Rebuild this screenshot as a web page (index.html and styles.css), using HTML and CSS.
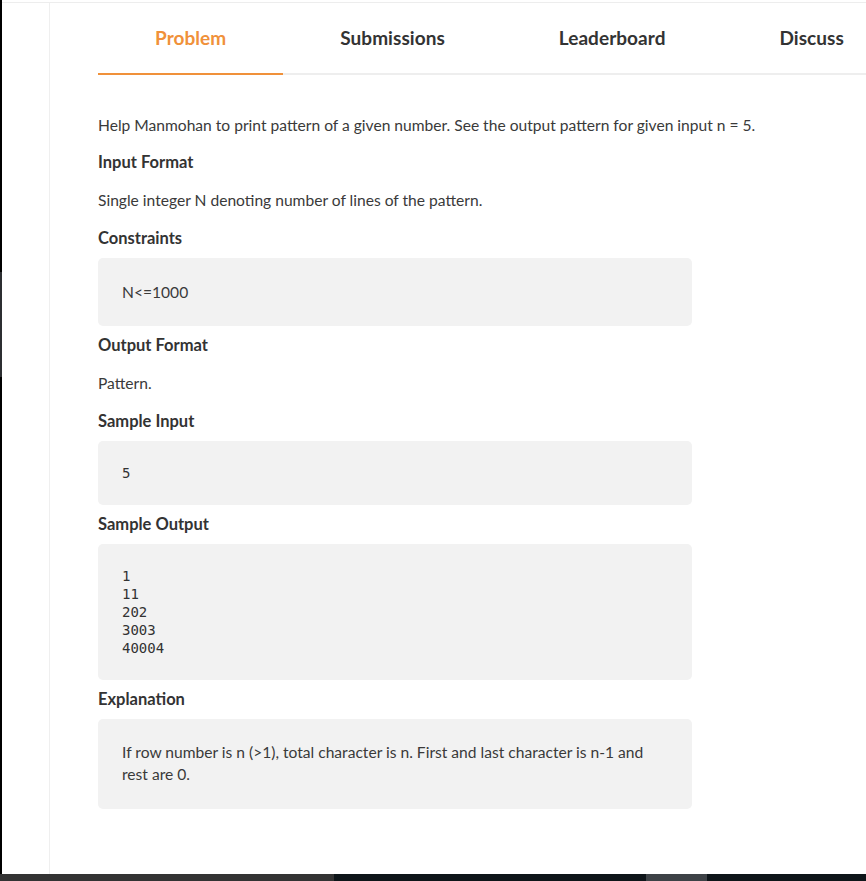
FILE: index.html
```html
<!DOCTYPE html>
<html lang="en">
<head>
<meta charset="utf-8">
<title>Problem</title>
<link rel="stylesheet" href="styles.css">
</head>
<body>
<div class="screen">
  <div class="window">
    <div class="edge"></div>
    <div class="frame">
      <div class="sidebar"></div>
      <main class="main">
        <nav class="tabs">
          <a class="tab active">Problem</a>
          <a class="tab">Submissions</a>
          <a class="tab">Leaderboard</a>
          <a class="tab">Discuss</a>
        </nav>
        <section class="content">
          <p class="lead">Help Manmohan to print pattern of a given number. See the output pattern for given input n = 5.</p>
          <h3 class="head">Input Format</h3>
          <p class="text">Single integer N denoting number of lines of the pattern.</p>
          <h3 class="head">Constraints</h3>
          <div class="box">N&lt;=1000</div>
          <h3 class="head">Output Format</h3>
          <p class="text">Pattern.</p>
          <h3 class="head">Sample Input</h3>
          <pre class="box code">5</pre>
          <h3 class="head">Sample Output</h3>
          <pre class="box code">1
11
202
3003
40004</pre>
          <h3 class="head">Explanation</h3>
          <div class="box expl">If row number is n (&gt;1), total character is n. First and last character is n-1 and rest are 0.</div>
        </section>
      </main>
    </div>
  </div>
  <div class="taskbar"></div>
</div>
</body>
</html>
```
FILE: styles.css
```css
html, body {
  margin: 0;
  padding: 0;
  background: #ffffff;
  overflow: hidden;
}
.screen {
  width: 866px;
  height: 881px;
  display: flex;
  flex-direction: column;
  font-family: Lato, "Noto Sans", sans-serif;
  color: #3a3a3a;
}
.window {
  height: 874px;
  display: flex;
}
.edge {
  width: 2px;
  flex: none;
  background: linear-gradient(to bottom, #000 0 272px, #2c2e31 272px 377px, #000 377px);
}
.frame {
  flex: 1;
  display: flex;
  margin-top: 2px;
  border-top: 1px solid #ededed;
  min-width: 0;
}
.sidebar {
  width: 47px;
  flex: none;
  border-right: 1px solid #efefef;
}
.main {
  flex: 1;
  min-width: 0;
  overflow: hidden;
  padding-left: 48px;
}
.tabs {
  display: flex;
  flex-wrap: nowrap;
  white-space: nowrap;
  border-bottom: 2px solid #eeeeee;
}
.tab {
  flex: none;
  padding: 0 57px;
  line-height: 70px;
  font-size: 19px;
  letter-spacing: 0.05px;
  font-weight: 700;
  color: #333333;
  margin-bottom: -2px;
  border-bottom: 2px solid transparent;
}
.tab.active {
  color: #f0913a;
  border-bottom-color: #f0913a;
}
.content {
  padding-top: 39px;
  font-size: 15.6px;
  line-height: 22px;
}
.lead {
  margin: 0 0 15px;
}
.text {
  margin: 16px 0;
}
.head {
  margin: 0 0 9px;
  font-size: 16.5px;
  line-height: 22px;
  font-weight: 700;
  color: #333333;
}
.box {
  width: 546px;
  margin: 0 0 8px;
  padding: 23px 24px;
  background: #f2f2f2;
  border-radius: 5px;
  line-height: 22px;
}
.code {
  font-family: "DejaVu Sans Mono", "Liberation Mono", monospace;
  font-size: 14px;
  line-height: 18px;
  color: #333333;
}
.expl {
  padding-top: 22px;
  padding-bottom: 24px;
}
.taskbar {
  height: 7px;
  background: linear-gradient(to right, #333333 0 334px, #0e1519 334px 646px, #3d4246 646px 707px, #0e1519 707px);
}
```
